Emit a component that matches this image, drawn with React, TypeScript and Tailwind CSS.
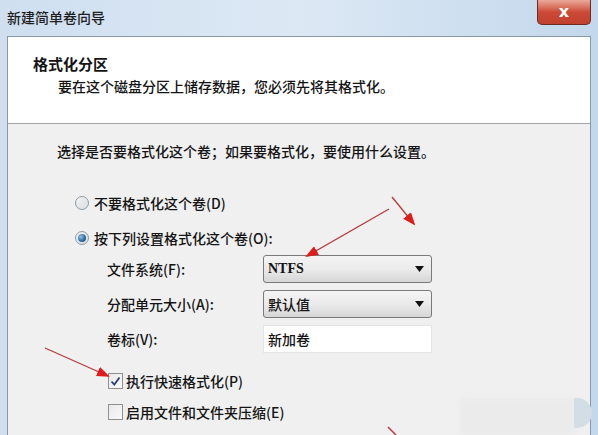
import React from 'react';

const font = "font-['Noto_Sans_CJK_SC','Noto_Sans',sans-serif]";

function Radio({ checked }: { checked?: boolean }) {
  return (
    <span className="w-[14px] h-[14px] rounded-full border border-[#8d9aa8] bg-gradient-to-br from-[#f4f4f4] to-[#d8dde2] flex items-center justify-center shrink-0">
      {checked && (
        <span className="w-[8px] h-[8px] rounded-full bg-[radial-gradient(circle_at_35%_35%,#8fc3ea,#1d5a8c_70%)]" />
      )}
    </span>
  );
}

function Check({ checked }: { checked?: boolean }) {
  return (
    <span className="w-[15px] h-[16px] border border-[#8e8f8f] bg-gradient-to-br from-[#e9e9e9] to-[#fafafa] flex items-center justify-center shrink-0">
      {checked && (
        <svg width="11" height="11" viewBox="0 0 11 11">
          <path d="M1.5 5.5 L4.3 8.6 L9.5 1.5" fill="none" stroke="#2a3f78" strokeWidth="1.8" />
        </svg>
      )}
    </span>
  );
}

function Select({ value, latin }: { value: string; latin?: boolean }) {
  return (
    <div className="w-[169px] h-[28px] rounded-[3px] border border-[#7a7a7a] bg-gradient-to-b from-[#f4f4f4] via-[#ebebeb] to-[#d6d6d6] flex items-center justify-between pl-[4px] pr-[7px]">
      <span className={latin ? "text-[14px] leading-none font-bold font-['Liberation_Serif',serif]" : 'text-[14px] leading-none'}>{value}</span>
      <svg width="9" height="6" viewBox="0 0 9 6">
        <path d="M0 0 H9 L4.5 6 Z" fill="#111" />
      </svg>
    </div>
  );
}

function Row({ label, children }: { label: string; children: React.ReactNode }) {
  return (
    <div className="flex items-center">
      <span className="w-[156px] text-[14px] leading-[20px]">{label}</span>
      {children}
    </div>
  );
}

export default function App() {
  return (
    <div className={`relative w-[598px] h-[435px] overflow-hidden bg-gradient-to-r from-[#cfdff0] via-[#dce8f4] to-[#c3d8ec] flex flex-col text-[#141414] font-medium ${font}`}>
      {/* title bar */}
      <div className="h-[36px] flex justify-between shrink-0">
        <span className="pl-[7px] pt-[7px] text-[14px] leading-[20px] text-[#1e1e1e]">新建简单卷向导</span>
        <div className="mr-[7px] w-[54px] h-[25px] rounded-b-[5px] border border-t-0 border-[#6e2b22] bg-gradient-to-b from-[#e9a89a] via-[#cc4a36] to-[#c0412f] flex items-center justify-center">
          <span className="text-white font-bold text-[16px] leading-none font-['DejaVu_Sans',sans-serif]">x</span>
        </div>
      </div>

      {/* client area */}
      <div className="flex-1 ml-[7px] mr-[7px] border border-b-0 border-[#8a97a6] flex flex-col">
        <div className="h-[87px] bg-white border-b border-[#a5a5a5] pl-[25px] pt-[17px] shrink-0">
          <div className="text-[15px] leading-[20px] font-bold">格式化分区</div>
          <div className="mt-[2px] pl-[25px] text-[14px] leading-[20px]">要在这个磁盘分区上储存数据，您必须先将其格式化。</div>
        </div>

        <div className="flex-1 bg-[#f0f0f0] pl-[49px] flex flex-col">
          <div className="mt-[17px] text-[14px] leading-[20px]">选择是否要格式化这个卷；如果要格式化，要使用什么设置。</div>

          <div className="ml-[18px] mt-[32px] flex items-center gap-[5px] text-[14px] leading-[20px]">
            <Radio />
            <span>不要格式化这个卷(D)</span>
          </div>
          <div className="ml-[18px] mt-[15px] flex items-center gap-[5px] text-[14px] leading-[20px]">
            <Radio checked />
            <span>按下列设置格式化这个卷(O):</span>
          </div>

          <div className="ml-[50px] mt-[7px] flex flex-col gap-[7px]">
            <Row label="文件系统(F):">
              <Select value="NTFS" latin />
            </Row>
            <Row label="分配单元大小(A):">
              <Select value="默认值" />
            </Row>
            <Row label="卷标(V):">
              <div className="w-[169px] h-[28px] bg-white border border-[#e4e4e4] flex items-center pl-[4px] text-[14px]">新加卷</div>
            </Row>
          </div>

          <div className="ml-[51px] mt-[18px] flex items-center gap-[3px] text-[14px] leading-[20px]">
            <Check checked />
            <span>执行快速格式化(P)</span>
          </div>
          <div className="ml-[51px] mt-[11px] flex items-center gap-[3px] text-[14px] leading-[20px]">
            <Check />
            <span>启用文件和文件夹压缩(E)</span>
          </div>
        </div>
      </div>

      {/* blurred artifact, bottom right */}
      <div className="absolute left-[460px] top-[398px] w-[116px] h-[37px] bg-[#ebebeb] blur-[2px]" />
      <div className="absolute left-[574px] top-[398px] w-[18px] h-[30px] rounded-r-full bg-[#d3dde5]" />

      {/* red annotation arrows */}
      <svg className="absolute inset-0 pointer-events-none" width="598" height="435">
        <defs>
          <marker id="ah" markerWidth="13" markerHeight="10" refX="11" refY="5" orient="auto" markerUnits="userSpaceOnUse">
            <path d="M0 0 L13 5 L0 10 Z" fill="#e01b1b" />
          </marker>
        </defs>
        <line x1="389" y1="209" x2="307" y2="256" stroke="#b8383a" strokeWidth="1.3" markerEnd="url(#ah)" />
        <line x1="392" y1="197" x2="414" y2="224" stroke="#b8383a" strokeWidth="1.3" markerEnd="url(#ah)" />
        <line x1="45" y1="348" x2="108" y2="376" stroke="#b8383a" strokeWidth="1.3" markerEnd="url(#ah)" />
        <line x1="388" y1="427" x2="396" y2="435" stroke="#c0393b" strokeWidth="1.5" />
      </svg>
    </div>
  );
}
